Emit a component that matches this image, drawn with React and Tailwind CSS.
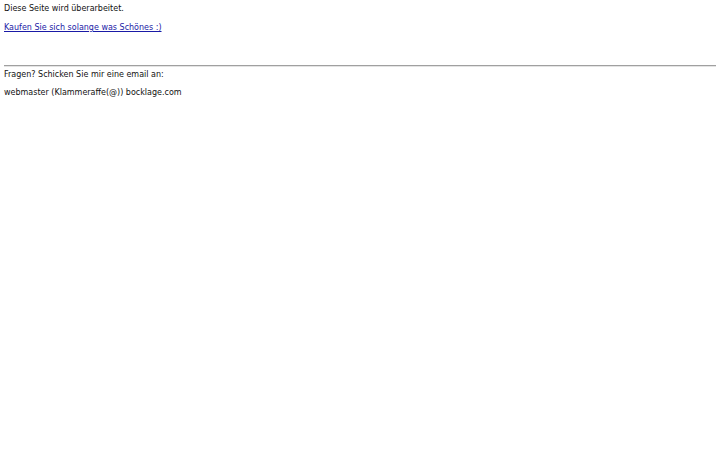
import React from 'react';

export default function App() {
  return (
    <div className="min-h-[450px] bg-white px-[4px] text-[8px] text-[#111] font-['DejaVu_Sans',sans-serif]">
      <p className="pt-[3px] leading-[11px]">Diese Seite wird überarbeitet.</p>
      <p className="mt-2 leading-[11px]">
        <a href="#" className="text-[#1a1aa6] underline">
          Kaufen Sie sich solange was Schönes :)
        </a>
      </p>

      <hr className="mt-[32px] border-0 border-t border-b border-t-[#a0a0a0] border-b-[#e4e4e4]" />

      <p className="mt-[2px] leading-[11px]">Fragen? Schicken Sie mir eine email an:</p>
      <p className="mt-[7px] leading-[11px]">webmaster (Klammeraffe(@)) bocklage.com</p>
    </div>
  );
}
